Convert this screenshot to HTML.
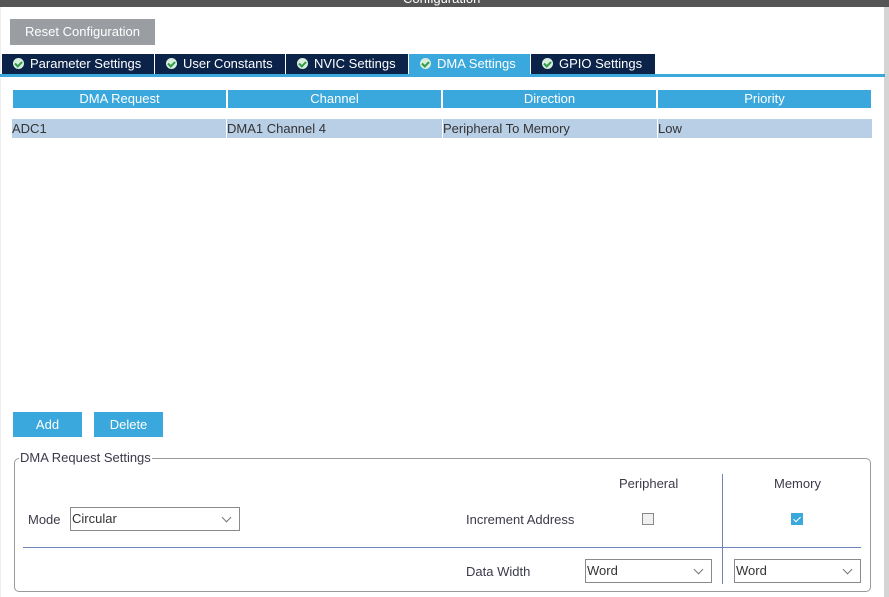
<!DOCTYPE html>
<html><head><style>
*{margin:0;padding:0;box-sizing:border-box}
body{width:889px;height:597px;position:relative;background:#fff;font-family:"Liberation Sans",sans-serif;font-size:13px;color:#3a3a4a;overflow:hidden}
.a{position:absolute}
.tab{position:absolute;top:54px;height:20px;background:#0b2249;color:#fff;font-size:13px;line-height:20px;padding-left:11px;white-space:nowrap}
.tab i{display:inline-block;width:11px;height:11px;border-radius:50%;background:#d8eedd;margin-right:6px;vertical-align:-1px;position:relative}
.tab i:after{content:"";position:absolute;left:3px;top:2px;width:3px;height:5px;border:solid #2e9a4a;border-width:0 2px 2px 0;transform:rotate(45deg)}
.th{position:absolute;top:90px;height:18px;background:#3aa8dc;color:#fff;text-align:center;line-height:18px}
.td{position:absolute;top:119px;height:19px;background:#b8cfe6;line-height:19px;color:#333}
.btn{position:absolute;background:#3aa8dc;color:#fff;text-align:center;line-height:25px;height:25px}
.sel{position:absolute;border:1px solid #8a8a8a;background:#fff;height:24px;line-height:22px;padding-left:1px;color:#333}
.sel:after{content:"";position:absolute;right:9px;top:6px;width:6px;height:6px;border:solid #777;border-width:0 1px 1px 0;transform:rotate(45deg)}
</style></head><body>
<div class="a" style="left:0;top:0;width:889px;height:7px;background:#555"></div>
<div class="a" style="left:403px;top:-9px;color:#fff;font-size:13px">Configuration</div>
<div class="a" style="left:884px;top:7px;width:5px;height:590px;background:#d4d4d4"></div>
<div class="a" style="left:0;top:7px;width:1px;height:590px;background:#eee"></div>
<div class="a" style="left:10px;top:19px;width:145px;height:26px;background:#9a9ea3;color:#fff;line-height:26px;text-align:center">Reset Configuration</div>
<div class="tab" style="left:2px;width:152px"><i></i>Parameter Settings</div>
<div class="tab" style="left:155px;width:130px"><i></i>User Constants</div>
<div class="tab" style="left:286px;width:122px"><i></i>NVIC Settings</div>
<div class="tab" style="left:409px;width:121px;background:#3aa8dc"><i></i>DMA Settings</div>
<div class="tab" style="left:531px;width:124px"><i></i>GPIO Settings</div>
<div class="a" style="left:0;top:74px;width:885px;height:3px;background:#3aa8dc"></div>
<div class="th" style="left:13px;width:213px">DMA Request</div>
<div class="th" style="left:228px;width:213px">Channel</div>
<div class="th" style="left:443px;width:213px">Direction</div>
<div class="th" style="left:658px;width:213px">Priority</div>
<div class="td" style="left:12px;width:214px">ADC1</div>
<div class="td" style="left:227px;width:215px">DMA1 Channel 4</div>
<div class="td" style="left:443px;width:214px">Peripheral To Memory</div>
<div class="td" style="left:658px;width:214px">Low</div>
<div class="btn" style="left:13px;top:412px;width:69px">Add</div>
<div class="btn" style="left:94px;top:412px;width:69px">Delete</div>
<div class="a" style="left:14px;top:458px;width:857px;height:134px;border:1px solid #999;border-radius:5px"></div>
<div class="a" style="left:19px;top:450px;background:#fff;padding:0 1px;line-height:16px">DMA Request Settings</div>
<div class="a" style="left:28px;top:512px">Mode</div>
<div class="sel" style="left:70px;top:507px;width:170px">Circular</div>
<div class="a" style="left:23px;top:547px;width:838px;height:1px;background:#6f86b8"></div>
<div class="a" style="left:722px;top:474px;width:1px;height:110px;background:#6f86b8"></div>
<div class="a" style="left:619px;top:476px">Peripheral</div>
<div class="a" style="left:774px;top:476px">Memory</div>
<div class="a" style="left:466px;top:512px">Increment Address</div>
<div class="a" style="left:642px;top:513px;width:12px;height:12px;border:1px solid #888;background:#f0f0f0"></div>
<div class="a" style="left:791px;top:513px;width:12px;height:12px;background:#3aa8dc"><div class="a" style="left:4px;top:2px;width:4px;height:7px;border:solid #fff;border-width:0 1.5px 1.5px 0;transform:rotate(45deg)"></div></div>
<div class="a" style="left:466px;top:564px">Data Width</div>
<div class="sel" style="left:585px;top:559px;width:127px">Word</div>
<div class="sel" style="left:734px;top:559px;width:127px">Word</div>
</body></html>
